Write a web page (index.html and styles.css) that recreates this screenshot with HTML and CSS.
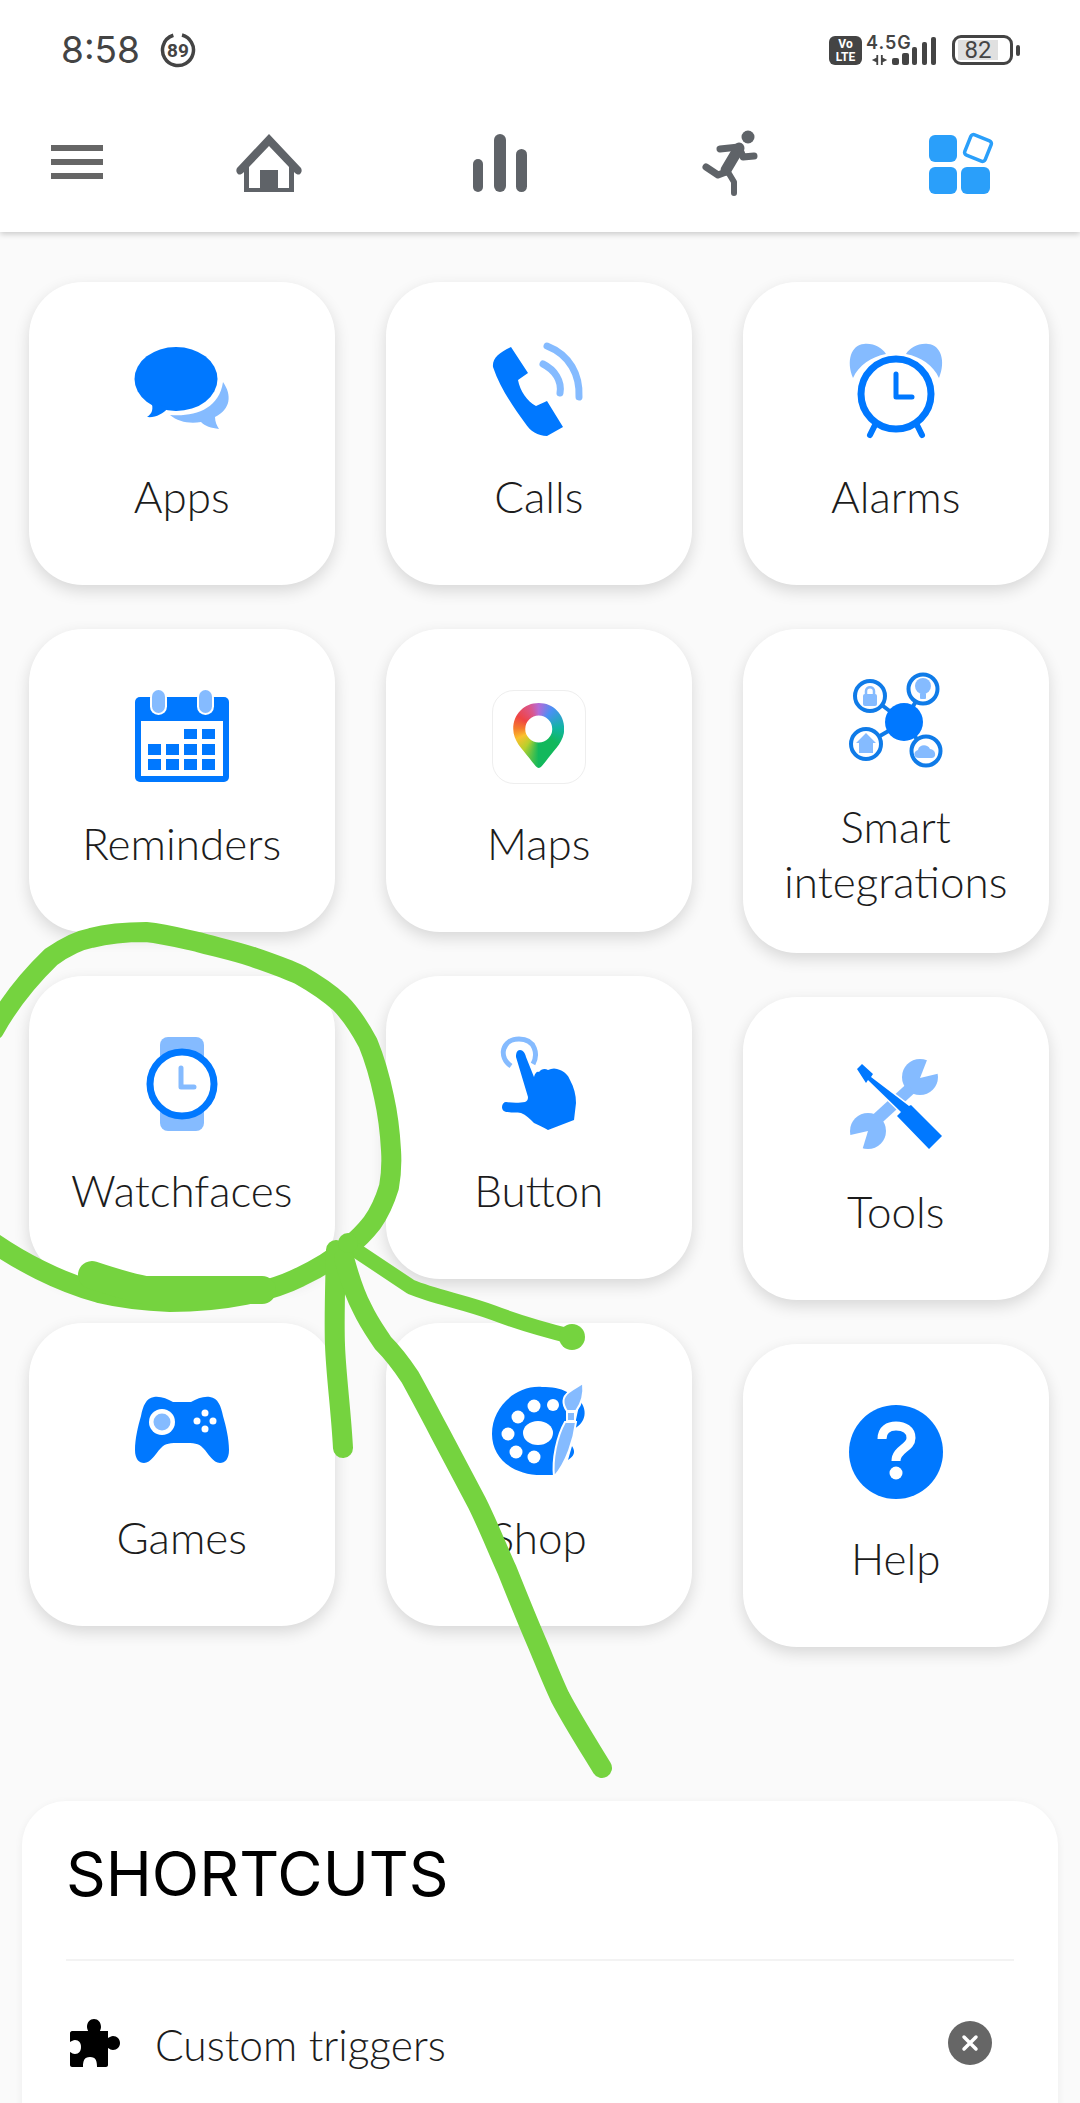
FILE: index.html
```html
<!DOCTYPE html>
<html lang="en">

<head>
    <meta charset="UTF-8">
    <meta name="viewport" content="width=device-width, initial-scale=1.0">
    <title>Features</title>
    <link rel="stylesheet" href="styles.css">
</head>

<body>
    <header class="top">
        <div class="status">
            <div class="status-left">
                <span class="time">8:58</span>
                <span class="ring-badge">
                    <svg width="36" height="36" viewBox="0 0 36 36">
                        <circle cx="18" cy="18" r="15.5" fill="none" stroke="#444" stroke-width="3.5" stroke-dasharray="88 9.4" transform="rotate(-75 18 18)" />
                        <text x="18" y="24.5" text-anchor="middle" class="ring-text">89</text>
                    </svg>
                </span>
            </div>
            <div class="status-right">
                <span class="volte">Vo<br>LTE</span>
                <span class="net">
                    <span class="net-label">4.5G</span>
                    <svg class="net-arrows" width="18" height="11" viewBox="0 0 18 11">
                        <path d="M7 0V11H5V8L0 5.5 5 3V0ZM10 0H12V3L17 5.5 12 8V11H10Z" fill="#444" />
                    </svg>
                </span>
                <svg class="bars" width="45" height="28" viewBox="0 0 45 28">
                    <rect x="0" y="21" width="7" height="7" rx="2" fill="#444" />
                    <rect x="10" y="16" width="7" height="12" rx="2" fill="#444" />
                    <rect x="20" y="10" width="5" height="18" rx="2" fill="#444" />
                    <rect x="30" y="5" width="5" height="23" rx="2" fill="#444" />
                    <rect x="39" y="0" width="5" height="28" rx="2" fill="#444" />
                </svg>
                <span class="battery">
                    <span class="battery-level">82</span>
                </span>
                <span class="battery-tip"></span>
            </div>
        </div>
        <nav class="tabs">
            <div class="menu">
                <span></span>
                <span></span>
                <span></span>
            </div>
            <div class="tab">
                <svg width="66" height="58" viewBox="0 0 66 58">
                    <path d="M33 0 65 34C66 36 66 38 64 40 63 41 61 41 58 38V58H8V38C5 41 3 41 2 40 0 38 0 36 1 34Z" fill="#5f6368" />
                    <path d="M33 12 53 33V54H42V36H24V54H13V33Z" fill="#fff" />
                </svg>
            </div>
            <div class="tab">
                <svg width="54" height="58" viewBox="0 0 54 58">
                    <rect x="0" y="25" width="10" height="33" rx="5" fill="#5f6368" />
                    <rect x="21" y="0" width="12" height="58" rx="6" fill="#5f6368" />
                    <rect x="43" y="15" width="11" height="43" rx="5.5" fill="#5f6368" />
                </svg>
            </div>
            <div class="tab">
                <svg width="57" height="66" viewBox="0 0 57 66" fill="none" stroke="#5f6368" stroke-linecap="round" stroke-linejoin="round">
                    <circle cx="46" cy="7" r="6.5" fill="#5f6368" stroke="none" />
                    <path d="M37 18 24 40" stroke-width="11" />
                    <path d="M18 19 37 17 41 27 52 26" stroke-width="7" />
                    <path d="M24 42 16 45 4 37" stroke-width="7" />
                    <path d="M26 42 32 52V63" stroke-width="6" />
                </svg>
            </div>
            <div class="tab">
                <svg width="68" height="64" viewBox="0 0 68 64">
                    <rect x="1" y="4" width="28" height="27" rx="6" fill="#2a9ffa" />
                    <rect x="1" y="36" width="28" height="27" rx="6" fill="#2a9ffa" />
                    <rect x="33" y="36" width="29" height="27" rx="6" fill="#2a9ffa" />
                    <rect x="39" y="6" width="22" height="22" rx="3" fill="none" stroke="#2a9ffa" stroke-width="3.5" transform="rotate(22 50 17)" />
                </svg>
            </div>
        </nav>
    </header>

    <main class="grid">
        <div class="column">
            <div class="card">
                <svg class="icon" viewBox="0 0 94 94">
                    <path d="M88 39C97 52 96 66 80 74 80 79 82 83 84 86 76 85 70 83 66 79 55 81 43 79 35 72 60 74 84 66 88 39Z" fill="#85bbff" />
                    <ellipse cx="41" cy="36" rx="41.5" ry="32" fill="#0078ff" />
                    <path d="M16 58C19 66 17 71 12 74 20 75 28 71 33 65Z" fill="#0078ff" />
                </svg>
                <span class="label">Apps</span>
            </div>
            <div class="card">
                <svg class="icon" viewBox="0 0 94 94">
                    <rect x="0" y="7" width="94" height="85" rx="5" fill="#0078ff" />
                    <rect x="6" y="31" width="82" height="55" fill="#fff" />
                    <rect x="15" y="-1" width="17" height="26" rx="8.5" fill="#fff" />
                    <rect x="62" y="-1" width="17" height="26" rx="8.5" fill="#fff" />
                    <rect x="17" y="0" width="13" height="23" rx="6.5" fill="#85bbff" />
                    <rect x="64" y="0" width="13" height="23" rx="6.5" fill="#85bbff" />
                    <g fill="#0078ff">
                        <rect x="49" y="39" width="13" height="10" />
                        <rect x="67" y="39" width="13" height="10" />
                        <rect x="13" y="54" width="13" height="11" />
                        <rect x="31" y="54" width="13" height="11" />
                        <rect x="49" y="54" width="13" height="11" />
                        <rect x="67" y="54" width="13" height="11" />
                        <rect x="13" y="69" width="13" height="11" />
                        <rect x="31" y="69" width="13" height="11" />
                        <rect x="49" y="69" width="13" height="11" />
                        <rect x="67" y="69" width="13" height="11" />
                    </g>
                </svg>
                <span class="label">Reminders</span>
            </div>
            <div class="card">
                <svg class="icon" viewBox="0 0 94 94">
                    <rect x="25" y="0" width="44" height="94" rx="8" fill="#85bbff" />
                    <circle cx="47" cy="47" r="32" fill="#fff" stroke="#0078ff" stroke-width="7" />
                    <path d="M46 31V50H59" fill="none" stroke="#85bbff" stroke-width="5" stroke-linecap="round" stroke-linejoin="round" />
                </svg>
                <span class="label">Watchfaces</span>
            </div>
            <div class="card">
                <svg class="icon" viewBox="0 0 94 94">
                    <path d="M19 13C26 12 32 15 38 18H56C62 15 68 12 75 13 83 14 86 22 88 32 91 42 94 55 94 66 94 75 90 79 85 79 78 79 74 70 68 64 63 59 60 59 47 59 34 59 31 59 26 64 20 70 16 79 9 79 4 79 0 75 0 66 0 55 3 42 6 32 8 22 11 14 19 13Z" fill="#0078ff" />
                    <circle cx="27" cy="38" r="13" fill="#fff" />
                    <circle cx="27" cy="38" r="8.5" fill="#85bbff" />
                    <g fill="#fff">
                        <circle cx="62" cy="37" r="3.5" />
                        <circle cx="78" cy="37" r="3.5" />
                        <circle cx="70" cy="29" r="3.5" />
                        <circle cx="70" cy="45" r="3.5" />
                    </g>
                </svg>
                <span class="label">Games</span>
            </div>
        </div>

        <div class="column">
            <div class="card">
                <svg class="icon" viewBox="0 0 94 94">
                    <path d="M19 4 36 30 26 37C28 48 35 58 44 63L55 58 71 84 55 93C46 93 38 88 33 80 22 65 8 45 1 24 0 15 8 9 19 4Z" fill="#0078ff" />
                    <path d="M55 3C78 12 88 32 87 54M51 21C63 27 70 38 68 50" fill="none" stroke="#85bbff" stroke-width="7" stroke-linecap="round" />
                </svg>
                <span class="label">Calls</span>
            </div>
            <div class="card">
                <div class="map-tile">
                    <div class="map-pin"></div>
                </div>
                <span class="label">Maps</span>
            </div>
            <div class="card">
                <svg class="icon" viewBox="0 0 94 94">
                    <path d="M19 29C6 20 10 2 27 2 44 2 46 18 41 27" fill="none" stroke="#85bbff" stroke-width="5" />
                    <path d="M28 13C31 13 33 16 34 20L42 40C43 36 45 34 47 35 49 32 53 31 56 33 60 31 64 31 68 33 73 35 76 38 78 43 82 50 84 58 84 66L82 83 56 93C52 91 47 88 42 86 38 82 34 78 29 76 25 75 20 76 16 75 12 75 10 73 10 70 10 67 12 65 14 65 20 66 28 66 33 65 35 64 36 63 36 60L24 20C24 16 25 13 28 13Z" fill="#0078ff" />
                </svg>
                <span class="label">Button</span>
            </div>
            <div class="card">
                <svg class="icon" viewBox="0 0 94 94">
                    <path d="M50 3C25 1 0 22 0 50 0 75 22 92 52 91H62L76 30 75 8C68 4 60 3 50 3Z" fill="#0078ff" />
                    <path d="M88 17C95 25 95 38 82 45ZM80 62C84 68 82 72 76 76Z" fill="#0078ff" />
                    <g fill="#fff">
                        <circle cx="42" cy="22" r="6.5" />
                        <circle cx="61" cy="21" r="6" />
                        <circle cx="26" cy="33" r="6.5" />
                        <circle cx="16" cy="50" r="6.5" />
                        <circle cx="24" cy="68" r="6.5" />
                        <circle cx="42" cy="73" r="6.5" />
                        <ellipse cx="46" cy="49" rx="15" ry="12" />
                    </g>
                    <g fill="#85bbff" stroke="#fff" stroke-width="2">
                        <path d="M91-1C92 8 91 18 84 27H75C70 20 70 13 77 8 82 4 87 2 91-1Z" />
                        <rect x="75" y="28" width="8" height="9" />
                        <path d="M73 38H84C82 55 75 78 62 93 60 75 65 52 73 38Z" />
                    </g>
                </svg>
                <span class="label">Shop</span>
            </div>
        </div>

        <div class="column">
            <div class="card">
                <svg class="icon" viewBox="0 0 94 94">
                    <path d="M4 35C-3 18 2 2 15 1 25 0 33 5 37 11 22 14 10 22 4 35ZM90 35C97 18 92 2 79 1 69 0 61 5 57 11 72 14 84 22 90 35Z" fill="#85bbff" />
                    <path d="M26 82 21 92M68 82 73 92" fill="none" stroke="#0078ff" stroke-width="6" stroke-linecap="round" />
                    <circle cx="47" cy="51" r="35" fill="#fff" stroke="#0078ff" stroke-width="7" />
                    <path d="M47 31V54H63" fill="none" stroke="#0078ff" stroke-width="5" stroke-linecap="round" stroke-linejoin="round" />
                </svg>
                <span class="label">Alarms</span>
            </div>
            <div class="card">
                <svg class="icon" viewBox="0 0 94 94">
                    <g stroke="#0f7be8" stroke-width="4">
                        <path d="M55 49 21 23M55 49 74 16M55 49 17 71M55 49 77 78" />
                        <circle cx="21" cy="23" r="15" fill="#fff" />
                        <circle cx="74" cy="16" r="14.5" fill="#fff" />
                        <circle cx="17" cy="71" r="15" fill="#fff" />
                        <circle cx="77" cy="78" r="14.5" fill="#fff" />
                    </g>
                    <circle cx="55" cy="49" r="19" fill="#0078ff" />
                    <g fill="#85bbff">
                        <rect x="14" y="21" width="14" height="12" rx="2" />
                        <path d="M17 22V18C17 13 25 13 25 18V22" fill="none" stroke="#85bbff" stroke-width="2.5" />
                        <circle cx="74" cy="13" r="8" />
                        <rect x="71" y="20" width="6" height="6" rx="1" />
                        <path d="M17 60 27 70H24V80H10V70H7Z" />
                        <path d="M70 85C64 85 64 78 69 77 70 71 79 71 81 76 87 76 88 85 83 85Z" />
                    </g>
                </svg>
                <span class="label">Smart integrations</span>
            </div>
            <div class="card">
                <svg class="icon" viewBox="0 0 94 94">
                    <circle cx="71" cy="19" r="18" fill="#85bbff" />
                    <polygon points="71,20 80,-3 96,14" fill="#fff" />
                    <circle cx="19" cy="73" r="18" fill="#85bbff" />
                    <polygon points="19,73 -3,78 12,96" fill="#fff" />
                    <path d="M62 30 27 62" stroke="#85bbff" stroke-width="12" />
                    <polygon points="13,6 24,16 22,19 60,48 62,47 93,78 80,91 48,58 52,54 19,22 17,25 8,11" fill="#0078ff" stroke="#fff" stroke-width="3" paint-order="stroke" />
                </svg>
                <span class="label">Tools</span>
            </div>
            <div class="card">
                <svg class="icon" viewBox="0 0 94 94">
                    <circle cx="47" cy="47" r="47" fill="#0078ff" />
                    <path d="M33 34C33 24 40 21 47 21 55 21 62 25 62 33 62 43 47 44 47 56" fill="none" stroke="#fff" stroke-width="9" />
                    <circle cx="47" cy="68" r="6.5" fill="#fff" />
                </svg>
                <span class="label">Help</span>
            </div>
        </div>
    </main>

    <section class="shortcuts">
        <h2 class="shortcuts-title">SHORTCUTS</h2>
        <div class="shortcut-row">
            <svg class="puzzle" width="50" height="48" viewBox="0 0 50 48">
                <path d="M17 8C17 3 20 0 24 0 28 0 31 3 31 8 31 10 30 11 30 12H38V19C40 18 41 17 43 17 47 17 50 20 50 24 50 28 47 31 43 31 41 31 40 30 38 29V46C38 47 37 48 36 48H27C27 42 26 38 20 38 14 38 13 42 13 48H2C1 48 0 47 0 46V33C2 34 3 35 5 35 9 35 11 32 11 28 11 24 9 21 5 21 3 21 2 22 0 23V14C0 13 1 12 2 12H18C18 11 17 10 17 8Z" fill="#000" />
            </svg>
            <span class="shortcut-name">Custom triggers</span>
            <span class="remove">
                <svg width="18" height="18" viewBox="0 0 18 18">
                    <path d="M3 3 15 15M15 3 3 15" stroke="#fff" stroke-width="3.5" stroke-linecap="round" />
                </svg>
            </span>
        </div>
    </section>

    <!-- green pen marks drawn over the screenshot -->
    <svg class="scribble" width="1080" height="2103" viewBox="0 0 1080 2103" fill="none" stroke="#75d33f" stroke-linecap="round" stroke-linejoin="round">
        <path d="M-6 1030C8 1005 24 983 51 957 68 945 80 940 91 938 110 933 128 932 146 932 165 934 180 938 198 942 216 947 235 951 253 957 270 963 285 968 300 975 316 984 328 992 340 1003 352 1015 360 1028 368 1043 375 1060 380 1078 384 1097 388 1115 390 1132 391 1150 392 1165 391 1176 389 1187 385 1200 380 1212 372 1223 365 1232 357 1240 348 1247 330 1262 315 1270 300 1277 282 1286 264 1291 245 1295 220 1300 195 1302 170 1302 145 1301 120 1298 99 1293 78 1287 58 1279 40 1270 24 1262 10 1254-6 1243" stroke-width="20" />
        <path d="M92 1275C110 1281 125 1286 145 1290L262 1290" stroke-width="28" />
        <path d="M348 1245 411 1287C435 1297 465 1302 494 1313 520 1323 545 1330 573 1337" stroke-width="15" />
        <path d="M336 1250C335 1290 334 1320 335 1345 336 1375 341 1410 343 1448" stroke-width="20" />
        <path d="M344 1258C350 1280 355 1295 362 1308 370 1325 378 1335 383 1343 395 1355 402 1365 410 1377 420 1395 430 1414 440 1433 452 1456 465 1480 477 1503 488 1525 497 1548 507 1570 517 1595 527 1620 537 1643 545 1662 552 1680 560 1697 572 1720 588 1745 602 1768" stroke-width="20" />
        <circle cx="348" cy="1243" r="10" fill="#75d33f" stroke="none" />
        <circle cx="572" cy="1337" r="13" fill="#75d33f" stroke="none" />
    </svg>
</body>

</html>
```
FILE: styles.css
```css
* {
    margin: 0;
    padding: 0;
    box-sizing: border-box;
}

html,
body {
    height: 2103px;
    overflow: hidden;
}

body {
    position: relative;
    background-color: #fafafa;
    font-family: "Lato", "Liberation Sans", sans-serif;
    color: #1c1c1c;
}

/* top area */
.top {
    height: 232px;
    background-color: #fff;
    box-shadow: 0 2px 6px rgba(0, 0, 0, 0.2);
}

.status {
    height: 100px;
    display: flex;
    align-items: center;
    justify-content: space-between;
    padding: 0 60px 0 61px;
}

.status-left,
.status-right {
    display: flex;
    align-items: center;
}

.time {
    font-family: "Inter", sans-serif;
    font-size: 37px;
    color: #444;
    line-height: 36px;
}

.ring-badge {
    display: flex;
    margin-left: 20px;
}

.ring-text {
    font-family: "Roboto", sans-serif;
    font-size: 19px;
    font-weight: 700;
    fill: #444;
}

.volte {
    width: 33px;
    height: 29px;
    border-radius: 6px;
    background-color: #444;
    color: #fff;
    font-family: "Roboto", sans-serif;
    font-size: 12px;
    font-weight: 700;
    line-height: 13px;
    text-align: center;
    padding-top: 2px;
}

.net {
    display: flex;
    flex-direction: column;
    width: 48px;
    height: 30px;
    margin-left: 4px;
}

.net-label {
    font-family: "Inter", sans-serif;
    font-size: 18px;
    font-weight: 600;
    line-height: 15px;
    letter-spacing: 1px;
    color: #444;
}

.net-arrows {
    margin-top: 5px;
    margin-left: 5px;
}

.bars {
    margin-left: -22px;
    margin-top: 1px;
}

.battery {
    width: 61px;
    height: 30px;
    border: 3px solid #444;
    border-radius: 9px;
    margin-left: 15px;
    padding: 2px 3px;
    display: flex;
}

.battery-level {
    width: 40px;
    background-color: #e0e0e0;
    font-family: "Roboto", sans-serif;
    font-size: 24px;
    line-height: 20px;
    text-align: center;
    color: #444;
}

.battery-tip {
    width: 4px;
    height: 11px;
    border-radius: 2px;
    background-color: #444;
    margin-left: 3px;
}

.tabs {
    height: 126px;
    display: flex;
    align-items: center;
    padding-right: 3px;
}

.menu {
    width: 153px;
    padding-left: 51px;
    display: flex;
    flex-direction: column;
    gap: 8px;
    margin-bottom: 3px;
}

.menu span {
    width: 52px;
    height: 6px;
    background-color: #666;
}

.tab {
    flex: 1;
    display: flex;
    justify-content: center;
}

/* feature cards */
.grid {
    display: flex;
    gap: 51.5px;
    padding: 50px 0 0 29px;
}

.column {
    width: 305.5px;
    display: flex;
    flex-direction: column;
    gap: 44px;
}

.card {
    min-height: 303px;
    padding: 44px 20px;
    background-color: #fff;
    border-radius: 54px;
    box-shadow: 0 6px 16px rgba(0, 0, 0, 0.14);
    display: flex;
    flex-direction: column;
    align-items: center;
    justify-content: center;
    gap: 32px;
}

.icon {
    width: 94px;
    height: 94px;
    overflow: visible;
}

.label {
    font-size: 44px;
    font-weight: 300;
    line-height: 55px;
    text-align: center;
}

.map-tile {
    width: 94px;
    height: 94px;
    border: 1px solid #eee;
    border-radius: 22px;
    display: flex;
    align-items: flex-start;
    justify-content: center;
    padding-top: 12px;
}

.map-pin {
    width: 51px;
    height: 65px;
    background: conic-gradient(from 0deg at 25.5px 25.5px, #b56ad6 0deg, #4a90f5 35deg, #10b5a0 90deg, #12b85c 130deg, #12b85c 180deg, #b8d02c 215deg, #fbc02d 245deg, #f57c2c 270deg, #ef4444 300deg, #d9578f 340deg, #b56ad6 360deg);
    clip-path: path(evenodd, "M25.5 0C40 0 51 11 51 26 51 38 42 46 35 55 31 60 28 65 25.5 65 23 65 20 60 16 55 9 46 0 38 0 26 0 11 11 0 25.5 0ZM25.5 12.5A13.5 13.5 0 1 0 25.5 39.5 13.5 13.5 0 1 0 25.5 12.5Z");
}

/* shortcuts */
.shortcuts {
    height: 400px;
    margin: 154px 22px 0;
    padding: 0 44px;
    background-color: #fff;
    border-radius: 44px;
    box-shadow: 0 2px 8px rgba(0, 0, 0, 0.06);
}

.shortcuts-title {
    height: 160px;
    padding-top: 38px;
    border-bottom: 2px solid #f3f3f3;
    font-family: "Inter", sans-serif;
    font-size: 62px;
    font-weight: 400;
    line-height: 70px;
    color: #000;
}

.shortcut-row {
    display: flex;
    align-items: center;
    padding: 52px 22px 0 4px;
}

.puzzle {
    flex: none;
}

.shortcut-name {
    flex: 1;
    margin-left: 35px;
    font-size: 42.5px;
    font-weight: 300;
    line-height: 55px;
    margin-top: 4px;
}

.remove {
    width: 44px;
    height: 44px;
    border-radius: 50%;
    background-color: #666;
    display: flex;
    align-items: center;
    justify-content: center;
}

/* pen marks */
.scribble {
    position: absolute;
    top: 0;
    left: 0;
    pointer-events: none;
}
```
